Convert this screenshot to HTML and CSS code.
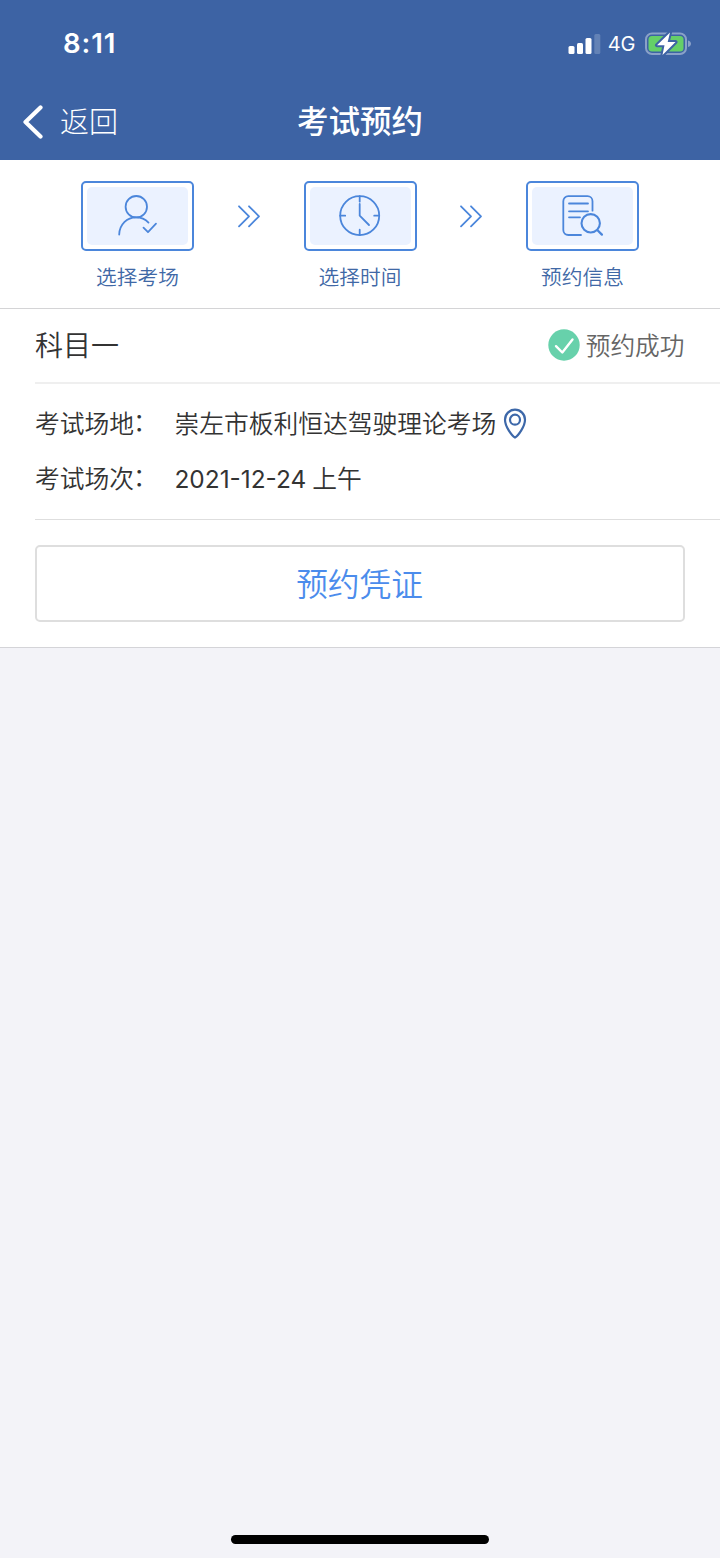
FILE: index.html
```html
<!DOCTYPE html>
<html lang="zh-CN">
<head>
<meta charset="utf-8">
<title>考试预约</title>
<link rel="stylesheet" href="styles.css">
</head>
<body>
<div class="app">
  <header class="header">
    <div class="status">
      <span class="time">8:11</span>
      <div class="indicators">
        <svg class="signal" width="33" height="22" viewBox="0 0 33 22" fill="#fff">
          <rect x="0.500" y="13" width="6" height="8" rx="1.500"/>
          <rect x="9" y="10" width="6" height="11" rx="1.500"/>
          <rect x="17.500" y="5" width="6" height="16" rx="1.500"/>
          <rect x="26.300" y="1" width="6" height="20" rx="1.500" opacity=".2"/>
        </svg>
        <span class="network">4G</span>
        <svg class="battery" width="46" height="26" viewBox="0 0 46 26">
          <rect x="1" y="2.500" width="40" height="20.500" rx="6" fill="none" stroke="#fff" stroke-opacity=".4" stroke-width="2"/>
          <path d="M43 9.500c2 .5 3 1.700 3 3.200s-1 2.700-3 3.200z" fill="#fff" fill-opacity=".4"/>
          <rect x="3.500" y="5" width="35" height="15.500" rx="3.500" fill="#65cf68"/>
          <path d="M25 1.500 12 14.200h7.500L17.500 24 30.500 11h-7.800z" fill="#fff" stroke="#3d63a4" stroke-width="4" stroke-linejoin="round" paint-order="stroke"/>
        </svg>
      </div>
    </div>
    <nav class="nav">
      <a class="back">
        <svg width="22" height="34" viewBox="0 0 22 34" fill="none" stroke="#fff" stroke-width="4.200" stroke-linecap="round" stroke-linejoin="round"><path d="M18.500 2.500 3.500 17l15 14.500"/></svg>
        <span class="back-text">返回</span>
      </a>
      <h1 class="title">考试预约</h1>
    </nav>
  </header>

  <section class="steps">
    <div class="step">
      <div class="tile"><div class="tile-fill">
        <svg class="icon" width="44" height="44" viewBox="0 0 44 44"><circle cx="20.300" cy="12.700" r="10.700"/><path d="M3.200 40.500C3.500 30.500 11 23.400 20 23.400c5 0 9.300 1.800 12.500 5.200M27.500 33.700l4.500 4.500 8-8.500"/></svg>
      </div></div>
      <span class="step-name">选择考场</span>
    </div>
    <svg class="arrows" width="24" height="24" viewBox="0 0 24 24"><path d="m2 2.300 10 10-10 10M12 2.300l10 10-10 10"/></svg>
    <div class="step">
      <div class="tile"><div class="tile-fill">
        <svg class="icon" width="44" height="44" viewBox="0 0 44 44"><circle cx="21.700" cy="21.700" r="19.500"/><path d="M21.700 2.200v5.500M21.700 35.700v5.500M2.200 21.700h5M36.200 21.700h5M21.700 10v11.700l9.300 9.300"/></svg>
      </div></div>
      <span class="step-name">选择时间</span>
    </div>
    <svg class="arrows" width="24" height="24" viewBox="0 0 24 24"><path d="m2 2.300 10 10-10 10M12 2.300l10 10-10 10"/></svg>
    <div class="step">
      <div class="tile"><div class="tile-fill">
        <svg class="icon" width="44" height="44" viewBox="0 0 44 44"><path d="M20 41H7.300a5 5 0 0 1-5-5V7.200a5 5 0 0 1 5-5h19.200a5 5 0 0 1 5 5v9.500M8 9.500h19M8 17.300h19M8 23.300h11"/><circle cx="29.700" cy="29.300" r="9.200" stroke-width="2.100"/><path d="m36.500 36.200 4.400 4.400" stroke-width="2.300"/></svg>
      </div></div>
      <span class="step-name">预约信息</span>
    </div>
  </section>

  <main class="card">
    <div class="card-head">
      <h2 class="subject">科目一</h2>
      <div class="result">
        <svg width="32" height="32" viewBox="0 0 32 32"><circle cx="16" cy="16" r="15.700" fill="#67d1ab"/><path d="m8 17.200 6.300 6.300L24.500 10.500" fill="none" stroke="#fff" stroke-width="2.400" stroke-linecap="round" stroke-linejoin="round"/></svg>
        <span class="result-text">预约成功</span>
      </div>
    </div>
    <dl class="details">
      <div class="row">
        <dt>考试场地<span class="colon">：</span></dt>
        <dd>崇左市板利恒达驾驶理论考场
          <svg class="pin" width="24" height="32" viewBox="0 0 24 32" fill="none" stroke="#3d68a9" stroke-width="2.200"><path d="M12 29.500C9 28 2 18.500 2 11.700a10 10 0 0 1 20 0C22 18.500 15 28 12 29.500z"/><circle cx="12" cy="11.700" r="5"/></svg>
        </dd>
      </div>
      <div class="row">
        <dt>考试场次<span class="colon">：</span></dt>
        <dd><span class="date">2021-12-24</span><span>上午</span></dd>
      </div>
    </dl>
    <div class="actions"><button class="voucher" type="button">预约凭证</button></div>
  </main>

  <footer class="footer"><div class="home-bar"></div></footer>
</div>
</body>
</html>
```

FILE: styles.css
```css
* { box-sizing: border-box; }

body {
  margin: 0;
  font-family: Inter, "Noto Sans CJK SC", sans-serif;
  font-weight: 350;
  color: #333;
  background: #f3f3f8;
}

h1, h2, dl, dd { margin: 0; font-weight: inherit; }

.app { display: flex; flex-direction: column; width: 720px; height: 1558px; }

.header { height: 160px; background: #3d63a4; color: #fff; }

.status {
  display: flex;
  justify-content: space-between;
  height: 84px;
  padding: 23px 29.5px 0 63px;
}

.time { font-size: 27.5px; font-weight: 600; line-height: 40px; letter-spacing: 0.9px; }

.indicators { display: flex; align-items: center; height: 42px; }

.network { margin: 0 9px 0 7px; font-size: 20px; font-weight: 400; line-height: 40px; }

.nav {
  display: grid;
  grid-template-columns: 1fr auto 1fr;
  align-items: center;
  height: 76px;
}

.back {
  display: flex;
  align-items: center;
  gap: 16px;
  padding-left: 22px;
  font-size: 29px;
  font-weight: 300;
  line-height: 40px;
}

.back-text { padding-top: 2px; }

.title { padding-bottom: 1px; font-size: 31.5px; font-weight: 500; line-height: 40px; }

.steps {
  display: flex;
  justify-content: space-between;
  height: 149px;
  padding: 21px 81px 0;
  background: #fff;
  border-bottom: 1px solid #d4d4d6;
}

.step { display: flex; flex-direction: column; align-items: center; width: 113px; }

.tile {
  width: 113px;
  height: 70px;
  padding: 4px;
  border: 2px solid #4b86db;
  border-radius: 5px;
}

.tile-fill {
  display: flex;
  align-items: center;
  justify-content: center;
  height: 58px;
  background: #ebf2ff;
  border-radius: 5px;
}

.icon, .arrows {
  fill: none;
  stroke: #4b86db;
  stroke-width: 1.8;
  stroke-linecap: round;
  stroke-linejoin: round;
}

.arrows { margin-top: 23px; }

.step-name { margin-top: 12px; font-size: 20.7px; line-height: 30px; color: #4068a6; }

.card { height: 339px; background: #fff; border-bottom: 1px solid #d4d4d8; }

.card-head {
  display: flex;
  align-items: center;
  justify-content: space-between;
  height: 75px;
  margin-left: 35px;
  padding: 0 35.5px 1px 0;
  border-bottom: 2px solid #efefef;
}

.subject { padding-top: 1px; font-size: 28px; line-height: 40px; }

.result {
  display: flex;
  align-items: center;
  gap: 6px;
  font-size: 24.7px;
  line-height: 36px;
  color: #666;
}

.result-text { padding-top: 1px; }

.details {
  height: 136px;
  margin-left: 35px;
  padding-top: 12px;
  border-bottom: 1px solid #dedede;
  font-size: 24.75px;
}

.row { display: flex; gap: 16px; height: 55px; }

.row dt, .row dd { display: flex; align-items: center; line-height: 36px; white-space: nowrap; }

.row dt { width: 123.5px; }

.colon { margin-left: -1px; padding-bottom: 4px; }

.row dd { gap: 7px; }

.date { margin-right: -1px; font-size: 24.4px; font-weight: 400; }

.actions { padding: 25px 35px 0; }

.voucher {
  width: 100%;
  height: 77px;
  padding: 0 7px 4px 6px;
  border: 2px solid #dedede;
  border-radius: 5px;
  background: #fff;
  color: #4b8cec;
  font: 350 31.7px/40px "Noto Sans CJK SC", sans-serif;
}

.footer {
  display: flex;
  flex: 1;
  align-items: flex-end;
  justify-content: center;
  padding-bottom: 14px;
}

.home-bar { width: 258px; height: 9px; border-radius: 5px; background: #000; }
```
